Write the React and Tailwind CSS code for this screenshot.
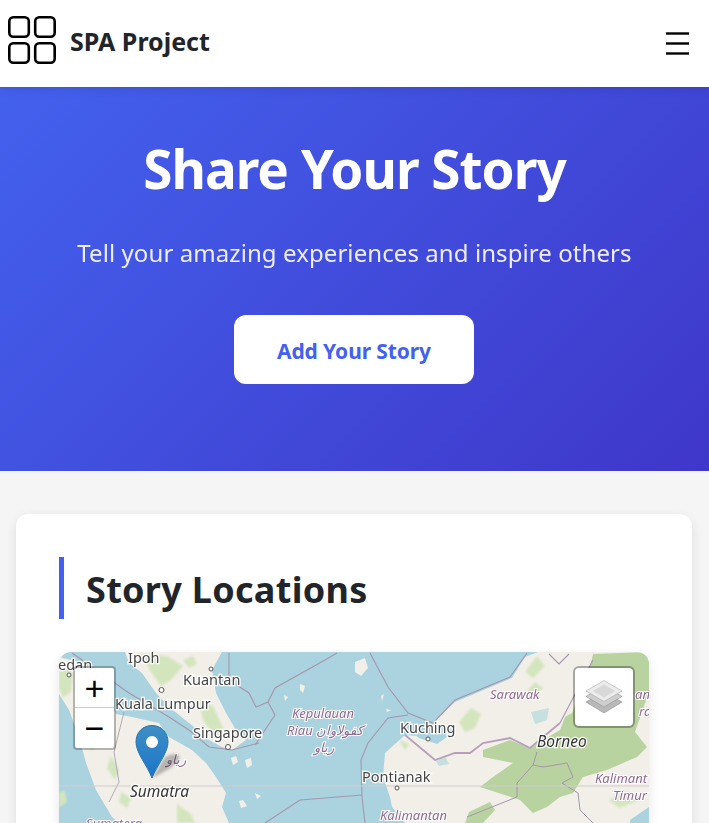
const cityLabel = "font-['Noto_Sans',sans-serif] text-[14.5px] fill-[#444444] stroke-white stroke-[2.5px] [paint-order:stroke]";
const islandLabel = "font-['Noto_Sans',sans-serif] italic text-[15.5px] fill-[#333333] stroke-white stroke-[2.5px] [paint-order:stroke]";
const regionLabel = "font-['Noto_Sans',sans-serif] italic text-[13px] fill-[#8e6a91] stroke-white stroke-2 [paint-order:stroke]";

function MapTiles() {
    return (
        <svg viewBox="0 0 590 400" className="block w-[590px] h-[400px] blur-[0.4px]">
            <rect width="590" height="400" fill="#aad3df" />
            {/* land */}
            <g fill="#f2efe9">
                <path d="M0 5 L20 10 L40 25 L57 62 L73 65 L100 71 L110 85 L133 98 L147 111 L157 125 L167 141 L163 155 L170 171 L170 400 L60 400 L60 171 L53 165 L37 138 L27 111 L20 85 L10 58 L0 42 Z" />
                <path d="M66 0 L70 11 L83 21 L97 41 L110 55 L130 71 L150 88 L163 95 L173 98 L187 88 L177 78 L167 61 L157 41 L153 18 L163 0 Z" />
                <path d="M396 78 L373 85 L346 83 L326 101 L324 125 L331 145 L333 155 L346 171 L346 400 L590 400 L590 0 L479 0 L466 5 L453 26 L396 50 L373 71 Z" />
                <path d="M112 95 L122 94 L136 102 L132 107 L118 103 Z M172 106 L177 104 L179 110 L174 113 Z M186 108 L192 106 L193 113 L188 116 Z M180 149 L184 148 L188 154 L182 156 Z" />
                <path d="M296 10 L306 6 L309 16 L302 24 L296 20 Z M241 32 L246 34 L244 41 L241 38 Z M225 43 L229 45 L226 49 Z M322 44 L325 42 L323 49 Z M327 57 L332 58 L328 60 Z M196 141 L202 144 L198 147 Z" />
            </g>
            <path d="M571 168 L590 155 L590 171 L571 171 Z" fill="#aad3df" />
            <path d="M395 80 L370 82 L352 80 L360 86 L378 92 Z" fill="#aad3df" />
            <path d="M472 60 L490 56 L488 68 L476 72 Z M376 108 L386 104 L390 112 L380 114 Z" fill="#c6e0e0" />
            {/* forest */}
            <g fill="#d3e5bd" className="blur-[1px]">
                <path d="M0 10 L14 20 L12 40 L4 46 L0 36 Z M20 72 L32 82 L36 98 L26 96 Z M52 104 L60 118 L56 128 L48 116 Z M62 140 L72 146 L68 156 L60 150 Z M118 152 L132 162 L136 171 L118 171 Z M0 140 L6 139 L8 150 L0 156 Z" />
                <path d="M82 2 L108 4 L124 14 L112 28 L102 34 L92 20 Z M140 48 L154 54 L166 80 L156 86 L144 68 Z M124 8 L134 4 L138 12 L130 16 Z" />
                <path d="M466 20 L478 4 L486 14 L474 26 Z M400 70 L412 56 L422 62 L416 76 L406 80 Z M466 42 L476 30 L484 36 L476 46 Z M340 88 L350 92 L346 98 Z M550 148 L568 140 L580 148 L560 156 Z" />
            </g>
            <g fill="#b9d3a0" className="blur-[0.6px]">
                <path d="M424 98 L451 88 L471 96 L501 78 L506 65 L513 61 L530 20 L534 2 L590 0 L590 40 L576 80 L588 95 L578 105 L548 118 L524 125 L514 141 L501 145 L488 155 L474 161 L461 148 L421 135 L434 125 L454 111 L424 105 Z" />
                <path d="M406 171 L410 160 L431 150 L436 158 L424 171 Z" />
            </g>
            {/* borders */}
            <g fill="none" stroke="#a596ad" strokeWidth="1.1">
                <path d="M13 1 L70 41 L110 65 L130 78 L150 95 L173 98 L200 91" />
                <path d="M196 93 L206 78 L216 63 L209 50 L216 36 L266 8 L278 1" />
                <path d="M170 1 L170 28 L190 41 L197 55 L209 50" />
                <path d="M311 1 L329 35 L349 61 L374 71 L396 48 L451 25 L468 1" />
                <path d="M349 63 L329 66 L309 91 L302 108 L303 145 L306 171" />
                <path d="M303 143 L241 148 L206 171" />
                <path d="M65 60 L55 100 L60 130 L50 150" strokeWidth="0.8" />
                <path d="M474 113 L484 115 L508 111 L514 125 L503 131 L519 141 L521 158 L534 171" strokeWidth="1" />
                <path d="M474 113 L458 131 L458 145 L408 165" strokeWidth="1" />
                <path d="M478 100 L474 113" strokeWidth="1" />
                <path d="M501 71 L525 25 L534 8 M490 2 L500 12 L510 2" />
            </g>
            <path d="M346 83 L376 108 L396 101 L411 101 L424 91 L451 86 L471 96 L501 71" fill="none" stroke="#b79fbb" strokeWidth="1.8" />
            <line x1="0" y1="134" x2="590" y2="134" stroke="#cfcdd0" strokeWidth="1" />
            {/* places */}
            <g fill="#ffffff" stroke="#555555" strokeWidth="1">
                <circle cx="102.500" cy="38" r="2.500" />
                <circle cx="152" cy="17" r="2" />
                <circle cx="169" cy="95" r="2.500" />
                <circle cx="369" cy="87" r="2" />
                <circle cx="338" cy="136" r="2" />
                <circle cx="10" cy="23" r="2" />
            </g>
            <text x="69" y="11" className={cityLabel}>Ipoh</text>
            <text x="124" y="33" className={cityLabel}>Kuantan</text>
            <text x="56" y="57" className={cityLabel}>Kuala Lumpur</text>
            <text x="134" y="86" className={cityLabel}>Singapore</text>
            <text x="-1" y="18" className={cityLabel}>edan</text>
            <text x="341" y="81" className={cityLabel}>Kuching</text>
            <text x="303" y="130" className={cityLabel}>Pontianak</text>
            <text x="71" y="145" className={islandLabel}>Sumatra</text>
            <text x="478" y="95" className={islandLabel}>Borneo</text>
            <text x="233" y="66" className={regionLabel}>Kepulauan</text>
            <text x="228" y="83" className={regionLabel}>Riau كفولاوان</text>
            <text x="255" y="100" className={regionLabel}>رياو</text>
            <text x="431" y="47" className={regionLabel}>Sarawak</text>
            <text x="536" y="131" className={regionLabel}>Kalimant</text>
            <text x="554" y="148" className={regionLabel}>Timur</text>
            <text x="321" y="168" className={regionLabel}>Kalimantan</text>
            <text x="27" y="176" className={regionLabel}>Sumatera</text>
            <text x="107" y="112" className={regionLabel}>رياو</text>
            <text x="576" y="47" className={regionLabel}>ant</text>
            <text x="580" y="64" className={regionLabel}>ra</text>
        </svg>
    );
}

function Pin() {
    return (
        <svg viewBox="0 0 60 54" className="w-[60px] h-[54px]">
            <defs>
                <linearGradient id="pinfill" x1="0" y1="0" x2="0" y2="1">
                    <stop offset="0" stopColor="#3f8fc4" />
                    <stop offset="1" stopColor="#1b74c9" />
                </linearGradient>
                <filter id="pinshadow">
                    <feGaussianBlur stdDeviation="1.500" />
                </filter>
            </defs>
            <path d="M17 53 L30 32 C38 28 46 28 44 34 C42 40 28 48 17 53 Z" fill="#000000" opacity="0.25" filter="url(#pinshadow)" />
            <path d="M17 53 C12 40 1 28 1 17 C1 7 8 0.500 17 0.500 C26 0.500 33 7 33 17 C33 28 22 40 17 53 Z" fill="url(#pinfill)" stroke="#2a78a8" strokeWidth="1" />
            <circle cx="17" cy="17" r="6" fill="#ffffff" />
        </svg>
    );
}

function LayersIcon() {
    return (
        <svg viewBox="0 0 36 34" className="w-9 h-[34px]">
            <path d="M0 22 L18 12 L36 22 L18 33 Z" fill="#b9b9b9" stroke="#8f8f8f" strokeWidth="0.600" />
            <path d="M0 16.500 L18 6 L36 16.500 L18 27 Z" fill="#cfcfcf" stroke="#8f8f8f" strokeWidth="0.600" />
            <path d="M0 11 L18 0.500 L36 11 L18 21.500 Z" fill="#ececec" stroke="#a8a8a8" strokeWidth="0.600" />
            <path d="M7 11 L18 4.500 L29 11 L18 17.500 Z" fill="#d8d8d8" />
        </svg>
    );
}

export default function App() {
    return (
        <div className="h-screen overflow-hidden bg-[#f5f5f5] text-[#212529] font-['Noto_Sans',sans-serif]">
            <header className="relative z-10 h-[87px] bg-white flex items-center justify-between pl-2 pr-5 pb-2 shadow-[0_2px_10px_rgba(0,0,0,0.1)]">
                <div className="flex items-center gap-[14px]">
                    <svg viewBox="0 0 48 48" className="w-12 h-12" fill="none" stroke="#000000" strokeWidth="2.600">
                        <rect x="1.300" y="1.300" width="19.500" height="19.500" rx="4" />
                        <rect x="27.200" y="1.300" width="19.500" height="19.500" rx="4" />
                        <rect x="1.300" y="27.200" width="19.500" height="19.500" rx="4" />
                        <rect x="27.200" y="27.200" width="19.500" height="19.500" rx="4" />
                    </svg>
                    <span className="mt-1 text-[25px] font-bold">SPA Project</span>
                </div>
                <svg viewBox="0 0 23 23" className="w-[23px] h-[23px] mt-[7px]" stroke="#000000" strokeWidth="2.400">
                    <line x1="0" y1="1.500" x2="23" y2="1.500" />
                    <line x1="0" y1="11.500" x2="23" y2="11.500" />
                    <line x1="0" y1="21.500" x2="23" y2="21.500" />
                </svg>
            </header>
            <section className="h-[384px] bg-[linear-gradient(135deg,#4361ee,#3f37c9)] flex flex-col items-center pt-[43px] text-white">
                <h1 className="text-[53px] leading-[77px] font-bold tracking-[-1px]">Share Your Story</h1>
                <p className="mt-[28px] text-2xl leading-[36px] opacity-90 tracking-[0.08px]">Tell your amazing experiences and inspire others</p>
                <button className="mt-[44px] mr-px w-[240px] h-[69px] pt-1 bg-white rounded-xl text-[#4361ee] text-[21px] font-bold tracking-[-0.1px]">Add Your Story</button>
            </section>
            <main className="pl-4 pr-[17px] pt-[43px]">
                <div className="bg-white rounded-xl p-[43px] shadow-[0_4px_12px_rgba(0,0,0,0.1)]">
                    <h2 className="h-[62px] pt-[2px] border-l-[5px] border-[#4361ee] pl-[22px] text-[36px] leading-[62px] font-bold tracking-[0.3px]">Story Locations</h2>
                    <div className="relative mt-[33px] h-[400px] rounded-xl overflow-hidden shadow-[0_4px_12px_rgba(0,0,0,0.1)]">
                        <MapTiles />
                        <div className="absolute left-[14px] top-[14px] w-[43px] bg-white rounded border-2 border-black/25 bg-clip-padding flex flex-col text-black">
                            <div className="h-[40px] flex items-center justify-center text-[34px] leading-none font-['Liberation_Sans',sans-serif] border-b border-[#cccccc]">+</div>
                            <div className="h-[40px] flex items-center justify-center text-[34px] leading-none font-['Liberation_Sans',sans-serif]">−</div>
                        </div>
                        <div className="absolute left-[76px] top-[73px]">
                            <Pin />
                        </div>
                        <div className="absolute left-[514px] top-[14px] w-[62px] h-[62px] bg-white rounded-md border-2 border-black/30 bg-clip-padding flex items-center justify-center">
                            <LayersIcon />
                        </div>
                    </div>
                </div>
            </main>
        </div>
    );
}
